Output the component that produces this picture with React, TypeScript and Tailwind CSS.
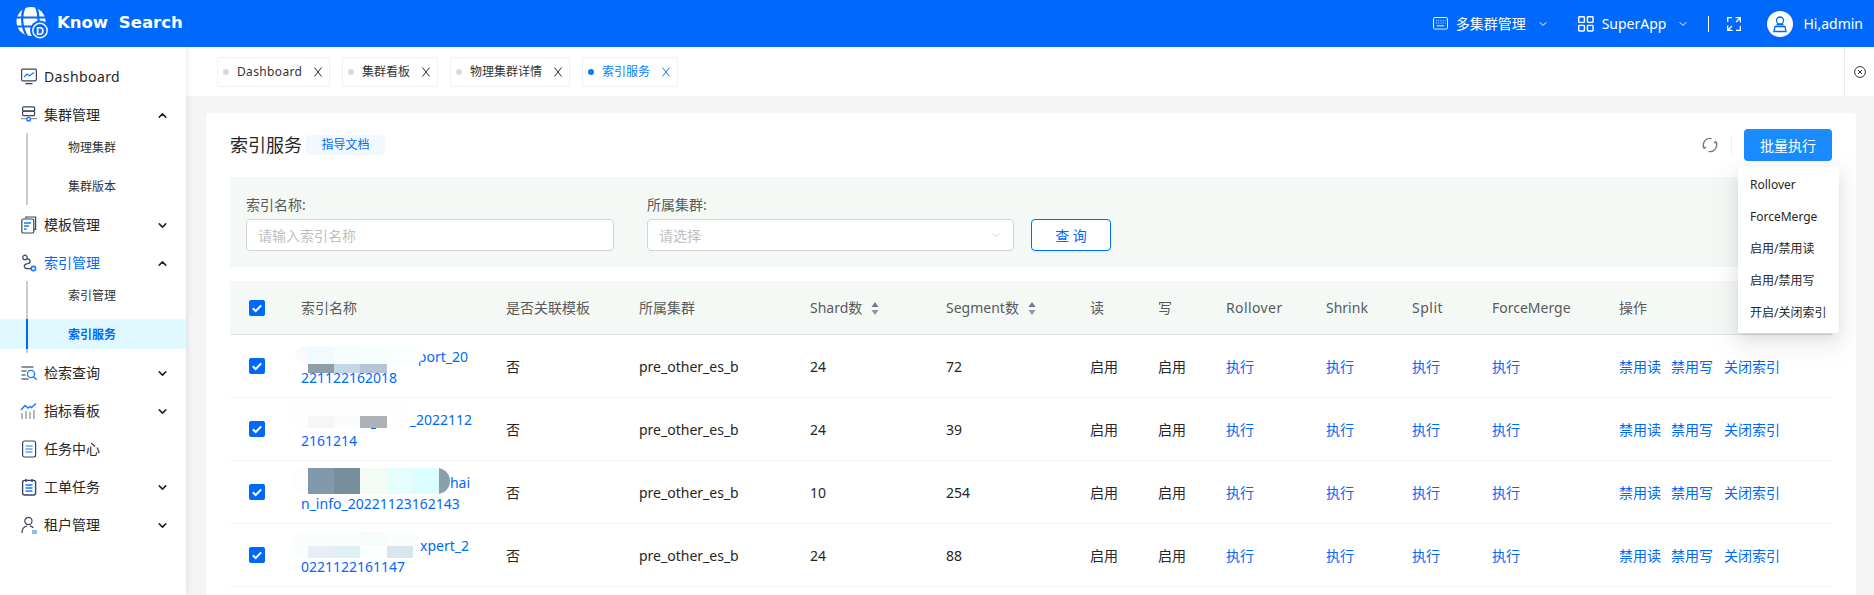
import React from "react";
import { ChevronDown, ChevronUp } from "lucide-react";

const BLUE = "#0069fb";

function Logo() {
  return (
    <svg width="34" height="34" viewBox="0 0 34 34" className="shrink-0">
      <circle cx="15" cy="14.500" r="14.500" fill="#fff" />
      <path d="M0 10.500H30M0 19.500H22M8.500 0C5 8 5 20 11.500 30M20 0C22 4 22.500 8 22.500 14" stroke={BLUE} strokeWidth="2.200" fill="none" />
      <circle cx="24" cy="23.500" r="10" fill={BLUE} />
      <circle cx="24" cy="23.500" r="7.200" fill="none" stroke="#fff" strokeWidth="1.400" />
      <text x="24" y="27.500" textAnchor="middle" fontSize="11" fontWeight="700" fill="#fff" fontFamily="'Liberation Sans',sans-serif">D</text>
    </svg>
  );
}

function NavIcon({ name }: { name: string }) {
  const d = "#3a4559";
  const b = "#1677ff";
  const g = "#8a94a3";
  const c = { width: 18, height: 18, viewBox: "0 0 18 18", fill: "none", strokeWidth: 1.2 };
  switch (name) {
    case "dash":
      return (
        <svg {...c}>
          <rect x="1.6" y="1.2" width="14.8" height="11.6" rx="1.2" stroke={d} />
          <path d="M4 9l3-3 2.5 1.8L14 4.5" stroke={b} />
          <path d="M5.5 15.6h7" stroke={d} strokeWidth="1.4" />
        </svg>
      );
    case "cluster":
      return (
        <svg {...c}>
          <rect x="2.6" y="0.8" width="12" height="4.4" rx="1" stroke={d} />
          <rect x="2.6" y="5.2" width="12" height="4.4" rx="1" stroke={d} />
          <path d="M1 12.6h16" stroke={g} />
          <path d="M8.6 9.6v2" stroke={g} />
          <circle cx="8.6" cy="13.2" r="1.8" fill="#fff" stroke={b} strokeWidth="1.4" />
        </svg>
      );
    case "tpl":
      return (
        <svg {...c}>
          <path d="M6 2.6V1h9.6v12.4H14" stroke={d} />
          <rect x="1.8" y="3" width="12" height="14" rx="1.6" stroke={d} />
          <path d="M4 7h7M4 10h5M4 13h2.5" stroke={b} strokeWidth="1.3" />
        </svg>
      );
    case "index":
      return (
        <svg {...c}>
          <circle cx="5" cy="3.4" r="2.2" stroke={d} />
          <path d="M7 4.6c4 .8 4 4.4.6 5C3.400 10.200 3 14.200 7 14.600h4" stroke={d} />
          <circle cx="13.400" cy="14.600" r="2.200" stroke={b} strokeWidth="1.6" />
        </svg>
      );
    case "search":
      return (
        <svg {...c}>
          <path d="M1.500 3h12M1.500 7h5M1.500 11h4M1.500 15h7" stroke={g} strokeWidth="1.800" />
          <circle cx="11" cy="10" r="3.600" stroke={b} strokeWidth="1.300" />
          <path d="M13.600 12.800l3 3" stroke={b} strokeWidth="1.300" />
        </svg>
      );
    case "chart":
      return (
        <svg {...c}>
          <path d="M1 8l4-4.500 3 2.500 2-1.500 1.500 1L16 1.500" stroke={b} strokeWidth="1.400" />
          <path d="M2 11v6M6 9v8M10 10v7M14 8v9" stroke={g} strokeWidth="1.300" />
        </svg>
      );
    case "task":
      return (
        <svg {...c}>
          <rect x="2.600" y="1" width="13" height="16" rx="2" stroke={d} />
          <path d="M5.500 6h7M5.500 9h7M5.500 12h7" stroke={b} strokeWidth="1.200" />
        </svg>
      );
    case "order":
      return (
        <svg {...c}>
          <rect x="2.600" y="2.400" width="13" height="14.600" rx="2" stroke={d} strokeWidth="1.400" />
          <path d="M6 1v3M12 1v3" stroke={d} strokeWidth="1.400" />
          <path d="M5.500 7h7M5.500 10h7M5.500 13h7" stroke={b} strokeWidth="1.400" />
        </svg>
      );
    default:
      return (
        <svg {...c}>
          <circle cx="8.400" cy="5" r="3.600" stroke={d} />
          <path d="M2 17c0-4 2-6.500 5-7M10 9.800c1.500.3 2.500 1 3.300 2" stroke={d} />
          <path d="M12 15h5M12 17h5" stroke={b} strokeWidth="1.100" />
        </svg>
      );
  }
}

function NavItem({ icon, label, open, active, wide }: { icon: string; label: string; open?: boolean; active?: boolean; wide?: boolean }) {
  return (
    <div className="flex h-[38px] items-center pl-[20px] pr-[17px]">
      <span className="mr-[6px] flex w-[18px] shrink-0 items-center justify-center">
        <NavIcon name={icon} />
      </span>
      <span className={`relative -top-[1px] flex-1 text-[14px] ${active ? "text-[#0069fb]" : "text-[#262626]"} ${wide ? "tracking-[0.4px]" : ""}`}>{label}</span>
      {open === undefined ? null : open ? (
        <ChevronUp size={13} strokeWidth={3} className="text-[#262626]" />
      ) : (
        <ChevronDown size={13} strokeWidth={3} className="text-[#262626]" />
      )}
    </div>
  );
}

function SubNav({ items, active }: { items: string[]; active?: string }) {
  return (
    <div className="relative -mt-[2px] flex flex-col gap-[9px] pb-[5px]">
      <div className="absolute bottom-[1px] left-[26px] top-[1px] w-[2px] bg-[#c8cccf]" />
      {items.map((t) => (
        <div
          key={t}
          className={`relative flex h-[30px] items-center pl-[68px] pt-[1px] text-[12px] ${
            t === active ? "bg-[#e0f8ff] font-semibold text-[#0069fb]" : "text-[#333]"
          }`}
        >
          {t === active && <div className="absolute bottom-0 left-[26px] top-0 w-[2px] bg-[#0069fb]" />}
          {t}
        </div>
      ))}
    </div>
  );
}

function Sidebar() {
  return (
    <aside className="relative z-10 w-[186px] shrink-0 bg-white pt-[11px] shadow-[1px_0_6px_rgba(20,70,140,0.12)]">
      <NavItem icon="dash" label="Dashboard" wide />
      <NavItem icon="cluster" label="集群管理" open />
      <SubNav items={["物理集群", "集群版本"]} />
      <NavItem icon="tpl" label="模板管理" open={false} />
      <NavItem icon="index" label="索引管理" open active />
      <SubNav items={["索引管理", "索引服务"]} active="索引服务" />
      <NavItem icon="search" label="检索查询" open={false} />
      <NavItem icon="chart" label="指标看板" open={false} />
      <NavItem icon="task" label="任务中心" />
      <NavItem icon="order" label="工单任务" open={false} />
      <NavItem icon="user" label="租户管理" open={false} />
    </aside>
  );
}

function Header() {
  return (
    <header className="flex h-[47px] shrink-0 items-center bg-[#0069fb] pl-[16px] pr-[11px] text-white">
      <Logo />
      <span className="ml-[7px] font-['DejaVu_Sans',sans-serif] text-[16.5px] font-bold [word-spacing:5px]">Know Search</span>
      <div className="flex-1" />
      <svg width="15" height="13" viewBox="0 0 16 14" fill="none" stroke="#fff" strokeWidth="1">
        <rect x="0.5" y="0.5" width="15" height="12.500" rx="1.500" />
        <path d="M3 4h1M5.500 4h1M8 4h1M10.500 4h1M13 4h.5M3 6.500h1M5.500 6.500h1M8 6.500h1M10.500 6.500h1M13 6.500h.5M4 9.500h8" />
      </svg>
      <span className="ml-[8px] text-[14px]">多集群管理</span>
      <ChevronDown size={12} strokeWidth={2} className="ml-[11px]" />
      <svg className="ml-[29px]" width="16" height="16" viewBox="0 0 17 17" fill="none" stroke="#fff" strokeWidth="1.500">
        <rect x="0.800" y="0.800" width="6" height="6" rx="0.800" />
        <rect x="10" y="0.800" width="6" height="6" rx="0.800" />
        <rect x="0.800" y="10" width="6" height="6" rx="0.800" />
        <rect x="10" y="10" width="6" height="6" rx="0.800" />
      </svg>
      <span className="ml-[8px] text-[14px]">SuperApp</span>
      <ChevronDown size={12} strokeWidth={2} className="ml-[11px]" />
      <div className="ml-[19px] h-[16px] w-px bg-white" />
      <svg className="ml-[18px]" width="14" height="14" viewBox="0 0 14 14" fill="none" stroke="#fff" strokeWidth="1.300">
        <path d="M.7 5V.7H5M13.300 9v4.300H9M8.500.7h4.800v4.800M13 1L9 5M.7 8.500v4.800h4.800M1 13l4-4" />
      </svg>
      <svg className="ml-[26px]" width="26" height="26" viewBox="0 0 26 26" fill="none">
        <circle cx="13" cy="13" r="13" fill="#fff" />
        <circle cx="13" cy="9.500" r="3.500" stroke="#0069fb" strokeWidth="1.300" />
        <path d="M9.500 13.500h7M7 20.500l1-5h10l1 5z" stroke="#0069fb" strokeWidth="1.300" />
      </svg>
      <span className="ml-[10px] text-[14px]">Hi,admin</span>
    </header>
  );
}

function Tab({ label, active, width }: { label: string; active?: boolean; width: string }) {
  const col = active ? "#0a7cff" : "#333";
  return (
    <div className={`flex h-[30px] items-center rounded-[2px] border border-[#f2f2f2] bg-white pl-[5px] pr-[7px] ${width}`}>
      <span className={`h-[6px] w-[6px] rounded-full ${active ? "bg-[#0a7cff]" : "bg-[#d9d9d9]"}`} />
      <span className={`ml-[8px] text-[12px] ${active ? "text-[#0a7cff]" : "text-[#333]"} ${label === "Dashboard" ? "tracking-[0.35px]" : ""}`}>{label}</span>
      <svg className="ml-auto" width="8" height="10" viewBox="0 0 8 10" fill="none" stroke={col} strokeWidth="1">
        <path d="M.5.5l7 9M7.500.5l-7 9" />
      </svg>
    </div>
  );
}

function TabBar() {
  return (
    <div className="flex h-[49px] shrink-0 bg-white">
      <div className="flex flex-1 gap-[12px] pl-[31px] pt-[10px]">
        <Tab label="Dashboard" width="w-[113px]" />
        <Tab label="集群看板" width="w-[96px]" />
        <Tab label="物理集群详情" width="w-[120px]" />
        <Tab label="索引服务" active width="w-[96px]" />
      </div>
      <div className="flex w-[30px] items-center justify-center border-l border-[#e3e8ee]">
        <svg width="12" height="12" viewBox="0 0 12 12" fill="none" stroke="#333" strokeWidth="1">
          <circle cx="6" cy="6" r="5.400" />
          <path d="M4 4l4 4M8 4l-4 4" />
        </svg>
      </div>
    </div>
  );
}

function Filter() {
  return (
    <div className="mt-[16px] flex h-[90px] items-end bg-[#f5f9f6] px-[16px] pb-[16px]">
      <div className="w-[368px]">
        <div className="mb-[3px] text-[14px] leading-[22px] text-[#595959]">索引名称:</div>
        <div className="flex h-[32px] items-center rounded-[4px] border border-[#d4d4d4] bg-white px-[11px] text-[14px] text-[#bfbfbf]">
          请输入索引名称
        </div>
      </div>
      <div className="ml-[33px] w-[367px]">
        <div className="mb-[3px] text-[14px] leading-[22px] text-[#595959]">所属集群:</div>
        <div className="flex h-[32px] items-center justify-between rounded-[4px] border border-[#d4d4d4] bg-white px-[11px] text-[14px] text-[#bfbfbf]">
          请选择
          <ChevronDown size={12} strokeWidth={1.500} className="text-[#c4c4c4]" />
        </div>
      </div>
      <button className="ml-[17px] h-[32px] w-[80px] rounded-[4px] border border-[#0069fb] bg-white text-[14px] text-[#0069fb] shadow-[0_2px_0_rgba(0,0,0,0.03)]">
        查 询
      </button>
    </div>
  );
}

type Block = [number, number, number, number, string, string?];

function Mosaic({ top, blocks }: { top: number; blocks: Block[] }) {
  return (
    <>
      {blocks.map(([x, y, w, h, c, r], i) => (
        <div
          key={i}
          className="absolute"
          style={{ left: x - 285, top: y - top, width: w, height: h, background: c, borderRadius: r }}
        />
      ))}
    </>
  );
}

const rows: {
  top: number;
  l1: string;
  l1w: string;
  l2: string;
  seg: string;
  shard: string;
  blocks: Block[];
}[] = [
  {
    top: 335,
    l1: "port_20",
    l1w: "w-[167px]",
    l2: "221122162018",
    shard: "24",
    seg: "72",
    blocks: [
      [295, 346, 128, 18, "#fefefe", "9px"],
      [295, 346, 30, 18, "#fcf9fe", "9px 0 0 9px"],
      [308, 346, 26, 18, "#f1fbfe"],
      [334, 346, 26, 18, "#f6fdff"],
      [360, 346, 27, 18, "#f6fffe"],
      [387, 346, 26, 18, "#f8fffe"],
      [308, 364, 26, 9, "#8f9ea5"],
      [334, 364, 26, 9, "#c3d7e6"],
      [360, 364, 27, 9, "#b7c4d6"],
    ],
  },
  {
    top: 398,
    l1: "_2022112",
    l1w: "w-[171px]",
    l2: "2161214",
    shard: "24",
    seg: "39",
    blocks: [
      [371, 428, 5, 1, "#0069fb"],
      [287, 401, 122, 27, "#fdfefd", "14px"],
      [308, 416, 26, 12, "#f5f7f6"],
      [334, 416, 26, 12, "#fafbfb"],
      [360, 416, 27, 12, "#acb2b5"],
    ],
  },
  {
    top: 461,
    l1: "hai",
    l1w: "w-[169px]",
    l2: "n_info_20221123162143",
    shard: "10",
    seg: "254",
    blocks: [
      [292, 468, 40, 26, "#fcfdfe", "13px 0 0 13px"],
      [425, 468, 25, 26, "#8a9fac", "0 13px 13px 0"],
      [308, 468, 26, 26, "#8298ab"],
      [334, 468, 26, 26, "#778e9c"],
      [360, 468, 27, 26, "#f3fbf5"],
      [387, 468, 26, 26, "#e6fdfd"],
      [413, 468, 26, 26, "#dbfefe"],
    ],
  },
  {
    top: 524,
    l1: "xpert_2",
    l1w: "w-[168px]",
    l2: "0221122161147",
    shard: "24",
    seg: "88",
    blocks: [
      [291, 532, 127, 26, "#f9fdfd", "13px"],
      [360, 532, 27, 14, "#f6fcfa"],
      [308, 546, 26, 12, "#e7eef5"],
      [334, 546, 26, 12, "#dcf0f5"],
      [360, 546, 27, 12, "#fbffff"],
      [387, 546, 26, 12, "#dae6ee"],
    ],
  },
];

function Check() {
  return (
    <span className="block h-[16px] w-[16px] rounded-[2px] bg-[#0069fb]">
      <svg width="16" height="16" viewBox="0 0 16 16" fill="none" stroke="#fff" strokeWidth="2">
        <path d="M3.800 8.200l2.900 2.800 5.500-5.600" />
      </svg>
    </span>
  );
}

function Sort() {
  return (
    <svg className="ml-[9px] inline-block align-[-2px]" width="8" height="13" viewBox="0 0 8 13">
      <path d="M4 0l3.500 5H.5z" fill="#6f7a88" />
      <path d="M4 13L.5 8h7z" fill="#8d96a3" />
    </svg>
  );
}

function TableArea() {
  const th = "h-[54px] border-b border-[#dfe3e6] bg-[#f5f9f6] px-[16px] text-left text-[14px] font-normal text-[#595959]";
  const td = "h-[63px] border-b border-[#f3f3f3] px-[16px] text-[14px] text-[#262626]";
  const act = "h-[63px] border-b border-[#f3f3f3] px-[16px] text-[14px] text-[#0069fb]";
  return (
    <table className="mt-[14px] w-[1602px] table-fixed border-separate border-spacing-0">
      <colgroup>
        <col className="w-[55px]" />
        <col className="w-[205px]" />
        <col className="w-[133px]" />
        <col className="w-[171px]" />
        <col className="w-[136px]" />
        <col className="w-[144px]" />
        <col className="w-[68px]" />
        <col className="w-[68px]" />
        <col className="w-[100px]" />
        <col className="w-[86px]" />
        <col className="w-[80px]" />
        <col className="w-[127px]" />
        <col className="w-[229px]" />
      </colgroup>
      <thead>
        <tr>
          <th className={`${th} !pl-[19px] !pr-0`}>
            <Check />
          </th>
          <th className={th}>索引名称</th>
          <th className={th}>是否关联模板</th>
          <th className={th}>所属集群</th>
          <th className={th}>
            Shard数
            <Sort />
          </th>
          <th className={th}>
            Segment数
            <Sort />
          </th>
          <th className={th}>读</th>
          <th className={th}>写</th>
          <th className={`${th} tracking-[0.4px]`}>Rollover</th>
          <th className={th}>Shrink</th>
          <th className={`${th} tracking-[0.5px]`}>Split</th>
          <th className={th}>ForceMerge</th>
          <th className={th}>操作</th>
        </tr>
      </thead>
      <tbody>
        {rows.map((r) => (
          <tr key={r.top}>
            <td className={`${td} !pl-[19px] !pr-0`}>
              <Check />
            </td>
            <td className={`${td} relative`}>
              <div className="relative top-[1px] whitespace-nowrap text-[14px] leading-[21px] text-[#0069fb]">
                <div className={`${r.l1w} text-right`}>{r.l1}</div>
                <div>{r.l2}</div>
              </div>
              <Mosaic top={r.top} blocks={r.blocks} />
            </td>
            <td className={td}>否</td>
            <td className={td}>pre_other_es_b</td>
            <td className={td}>{r.shard}</td>
            <td className={td}>{r.seg}</td>
            <td className={td}>启用</td>
            <td className={td}>启用</td>
            <td className={act}>执行</td>
            <td className={act}>执行</td>
            <td className={act}>执行</td>
            <td className={act}>执行</td>
            <td className={act}>
              <span>禁用读</span>
              <span className="ml-[10px]">禁用写</span>
              <span className="ml-[11px]">关闭索引</span>
            </td>
          </tr>
        ))}
      </tbody>
    </table>
  );
}

function Card() {
  return (
    <div className="relative min-h-0 flex-1 overflow-hidden rounded-t-[4px] bg-white px-[24px] pt-[16px]">
      <div className="flex h-[32px] items-center">
        <span className="text-[18px] text-[#262626]">索引服务</span>
        <span className="ml-[4px] flex h-[20px] w-[79px] items-center justify-center rounded-[4px] bg-[#f1f8ff] text-[12px] text-[#0069fb]">
          指导文档
        </span>
        <div className="flex-1" />
        <svg width="16" height="16" viewBox="0 0 16 16" fill="none" stroke="#6b7785" strokeWidth="1.400">
          <path d="M9.500 1.600A6.500 6.500 0 0 0 2.200 11" />
          <path d="M6.500 14.400A6.500 6.500 0 0 0 13.800 5" />
          <path d="M.8 9.500l1.400 2 1.900-1.500M15.200 6.500l-1.400-2-1.900 1.500" strokeWidth="1.100" />
        </svg>
        <div className="ml-[13px] h-[20px] w-px bg-[#f0f0f0]" />
        <button className="ml-[12px] h-[32px] w-[88px] rounded-[4px] bg-[#1a8cff] text-[14px] text-white">批量执行</button>
      </div>
      <Filter />
      <TableArea />
      <div className="absolute left-[1532px] top-[54px] z-20 w-[101px] rounded-[2px] bg-white pt-[2px] pb-[4px] text-[12px] text-[#262626] shadow-[0_3px_6px_-4px_rgba(0,0,0,0.12),0_6px_16px_0_rgba(0,0,0,0.08),0_9px_28px_8px_rgba(0,0,0,0.05)]">
        {["Rollover", "ForceMerge", "启用/禁用读", "启用/禁用写", "开启/关闭索引"].map((t) => (
          <div key={t} className="flex h-[32px] items-center whitespace-nowrap pl-[12px]">
            {t}
          </div>
        ))}
      </div>
    </div>
  );
}

export default function App() {
  return (
    <div className="flex h-[595px] w-full flex-col overflow-hidden bg-[#f5f5f5] font-['Noto_Sans','Noto_Sans_CJK_SC',sans-serif]">
      <Header />
      <div className="flex min-h-0 flex-1">
        <Sidebar />
        <div className="flex min-w-0 flex-1 flex-col">
          <TabBar />
          <div className="flex min-h-0 flex-1 flex-col pl-[20px] pr-[18px] pt-[17px]">
            <Card />
          </div>
        </div>
      </div>
    </div>
  );
}
